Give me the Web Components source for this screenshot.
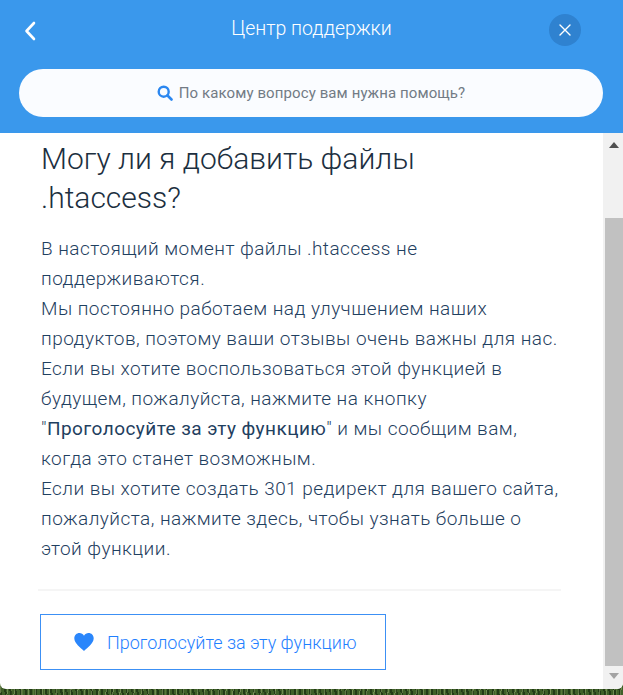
<!DOCTYPE html>
<html lang="ru"><head><meta charset="utf-8"><title>Центр поддержки</title>
<style>
html,body{margin:0;height:100%}
body{width:623px;height:695px;overflow:hidden;font-family:"Roboto","Liberation Sans",sans-serif;
background:
repeating-linear-gradient(97deg,rgba(170,190,130,.45) 0 1px,transparent 1px 7px),
repeating-linear-gradient(80deg,rgba(15,35,10,.6) 0 2px,transparent 2px 5px),
repeating-linear-gradient(90deg,rgba(120,150,80,.4) 0 1px,transparent 1px 11px),
#3f6029}
</style></head><body>
<help-panel>
<help-header slot="header" title-text="Центр поддержки" placeholder="По какому вопросу вам нужна помощь?"></help-header>
<help-article>
<span slot="title">Могу ли я добавить файлы .htaccess?</span>
<span>В настоящий момент файлы .htaccess не поддерживаются.<br>Мы постоянно работаем над улучшением наших продуктов, поэтому ваши отзывы очень важны для нас.<br>Если вы хотите воспользоваться этой функцией в будущем, пожалуйста, нажмите на кнопку "<b>Проголосуйте за эту функцию</b>" и мы сообщим вам, когда&nbsp;это станет возможным.<br>Если вы хотите создать 301 редирект для вашего сайта, пожалуйста, нажмите здесь, чтобы узнать больше о этой&nbsp;функции.</span>
<vote-button slot="action">Проголосуйте за эту функцию</vote-button>
</help-article>
</help-panel>
<script>
const def=(n,html)=>customElements.define(n,class extends HTMLElement{
  connectedCallback(){ if(this.shadowRoot)return; const s=this.attachShadow({mode:"open"});
    s.innerHTML=typeof html==="function"?html(this):html; }
});
def("help-panel",`<style>
:host{display:flex;flex-direction:column;width:623px;height:689px;background:#fff;border-radius:0 0 6px 6px;overflow:hidden}
.body{flex:1;min-height:0;display:flex}
</style><slot name="header"></slot><div class="body"><slot></slot><scroll-rail></scroll-rail></div>`);
def("help-header",h=>`<style>
:host{display:block;height:133px;box-sizing:border-box;background:#3a98ec;padding:11px 20px 0 19px;color:#fff;flex:none}
.top{display:flex;align-items:center;justify-content:space-between;height:36px;padding-right:22px}
.title{font-size:19.5px;font-weight:300;position:absolute;left:0;width:623px;text-align:center;line-height:36px}
.back{display:block;margin:3px 0 0 5px}
.close{width:32px;height:32px;border-radius:50%;background:#2f82d0;display:flex;align-items:center;justify-content:center;margin-top:1px}
.search{margin-top:22px;height:48px;border-radius:24px;background:#fafcff;display:flex;align-items:center;justify-content:center;gap:6px;color:#727b85;font-size:15px;letter-spacing:.1px}
</style><div class="top">
<svg class="back" width="12" height="20" viewBox="0 0 12 20"><path d="M10 2 L2.5 10 L10 18" fill="none" stroke="#fff" stroke-width="2.6" stroke-linecap="round" stroke-linejoin="round"/></svg>
<div class="title">${h.getAttribute("title-text")}</div>
<div class="close"><svg width="12" height="12" viewBox="0 0 12 12"><path d="M1 1 L11 11 M11 1 L1 11" stroke="#fff" stroke-width="1.4" stroke-linecap="round"/></svg></div>
</div>
<div class="search"><svg width="16" height="16" viewBox="0 0 16 16"><circle cx="6.7" cy="6.7" r="5" fill="none" stroke="#2b87f0" stroke-width="2.4"/><path d="M10.5 10.5 L14.5 14.5" stroke="#2b87f0" stroke-width="2.6" stroke-linecap="round"/></svg><span>${h.getAttribute("placeholder")}</span></div>`);
def("help-article",`<style>
:host{display:block;flex:1;min-width:0;box-sizing:border-box;padding:6px 42px 0 41px;color:#1f4060;overflow:hidden}
h1{margin:0;font-size:30px;font-weight:300;line-height:39px;color:#1c2f40;max-width:440px}
p{margin:17px 0 0;font-size:19px;font-weight:300;letter-spacing:.45px;line-height:30px}
b{font-weight:700;letter-spacing:.2px;color:#183a5a}
hr{border:0;height:2px;background:#f5f5f5;margin:25px 0 0 -3px}
.act{margin:23px 0 0 -1px}
</style><h1><slot name="title"></slot></h1><p><slot></slot></p><hr><div class="act"><slot name="action"></slot></div>`);
def("vote-button",`<style>
:host{display:flex;align-items:center;width:346px;height:56px;box-sizing:border-box;border:1px solid #3c90f5;padding:0 0 0 33px;gap:13px;color:#1f80ff;font-size:18px;font-weight:300}
svg{flex:none}
</style><svg width="20" height="18" viewBox="0 0 20 18"><path d="M10 18 C7 15 0.3 10.5 0.3 5.3 C0.3 2.2 2.7 0 5.4 0 C7.3 0 9 1 10 2.7 C11 1 12.7 0 14.6 0 C17.3 0 19.7 2.2 19.7 5.3 C19.7 10.5 13 15 10 18Z" fill="#2a86fb"/></svg><span><slot></slot></span>`);
def("scroll-rail",`<style>
:host{display:flex;flex-direction:column;flex:none;width:20px;box-sizing:border-box;padding-left:2px;background:#f1f1f1}
.btn{display:flex;align-items:center;justify-content:center;flex:none}
.up{width:0;height:0;border:5.5px solid transparent;border-top:0;border-bottom:6px solid #505050}
.down{width:0;height:0;border:5.5px solid transparent;border-bottom:0;border-top:6px solid #a3a3a3}
.gap{height:61px;flex:none}
.thumb{flex:1;background:#c1c1c1}
</style><div class="btn" style="height:24px"><div class="up"></div></div><div class="gap"></div><div class="thumb"></div><div class="btn" style="height:23px;padding-bottom:0"><div class="down" style="margin-bottom:3px"></div></div>`);
</script>
</body></html>
